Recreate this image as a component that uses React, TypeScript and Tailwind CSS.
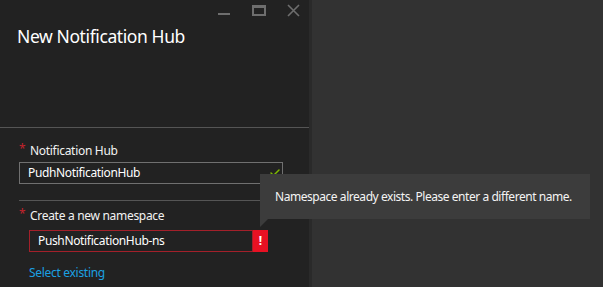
import { Check } from 'lucide-react';

const font = { fontFamily: '"Noto Sans", "Open Sans", sans-serif' };

function Required({ label }: { label: string }) {
  return (
    <div className="flex items-center h-[16px] text-[12px] tracking-[-0.3px] text-[#f2f2f2]">
      <span className="w-[11px] text-[#c4222c] text-[12px] leading-none -mt-[4px]">*</span>
      <span>{label}</span>
    </div>
  );
}

export default function App() {
  return (
    <div className="relative w-[603px] h-[287px] flex bg-[#323232] overflow-hidden" style={font}>
      <div className="w-[309px] h-full bg-[#222222] flex flex-col">
        <div className="h-[128px] border-b border-[#555555]">
          <div className="flex justify-end items-start h-[22px] pr-[9px] pt-[4px] gap-[21px]">
            <div className="w-[12px] h-[12px] flex items-end pb-[1px] mr-[1px]">
              <div className="w-[12px] h-[2px] bg-[#6e6e6e]" />
            </div>
            <div className="w-[14px] h-[11px] border-[2px] border-t-[3px] border-[#6e6e6e] mt-[1px]" />
            <svg width="13" height="13" viewBox="0 0 13 13" className="text-[#6e6e6e]">
              <path d="M1 1 L12 12 M12 1 L1 12" stroke="currentColor" strokeWidth="1.6" />
            </svg>
          </div>
          <h1 className="pl-[17px] mt-[2px] text-[17.5px] tracking-[-0.4px] leading-[24px] text-white">New Notification Hub</h1>
        </div>

        <div className="pl-[19px] pr-[26px] pt-[15px]">
          <Required label="Notification Hub" />
          <div className="relative mt-[3px] h-[22px] border border-[#707070] flex items-center pl-[8px] text-[12px] tracking-[-0.35px] text-white">
            PudhNotificationHub
            <Check className="absolute right-[1px] top-[4px] w-[12px] h-[12px] text-[#7fba00]" strokeWidth={3} />
          </div>
          <div className="mt-[16px] border-t border-[#555555]" />
          <div className="mt-[7px]">
            <Required label="Create a new namespace" />
          </div>
          <div className="ml-[10px] mt-[6px] w-[239px] h-[22px] flex">
            <div className="flex-1 border border-[#a3202a] flex items-center pl-[8px] text-[12px] tracking-[-0.35px] text-white">
              PushNotificationHub-ns
            </div>
            <div className="w-[15px] bg-[#e81123] flex items-center justify-center text-white text-[12px] font-bold">!</div>
          </div>
          <div className="ml-[10px] mt-[13px] h-[16px] flex items-center text-[12px] tracking-[-0.3px] text-[#1ba1e2]">Select existing</div>
        </div>
      </div>
      <div className="w-[3px] h-full bg-[#2a2a2a]" />

      <div className="absolute left-[260px] top-[174px] w-[330px] h-[45px] bg-[#3c3c3c] flex items-center pl-[15px] text-[12px] tracking-[-0.45px] text-[#f4f4f4] whitespace-nowrap">
        Namespace already exists. Please enter a different name.
        <svg width="9" height="9" viewBox="0 0 9 9" className="absolute left-0 top-[45px]">
          <path d="M0 0 L8 0 L0 8 Z" fill="#3c3c3c" />
        </svg>
      </div>
    </div>
  );
}
